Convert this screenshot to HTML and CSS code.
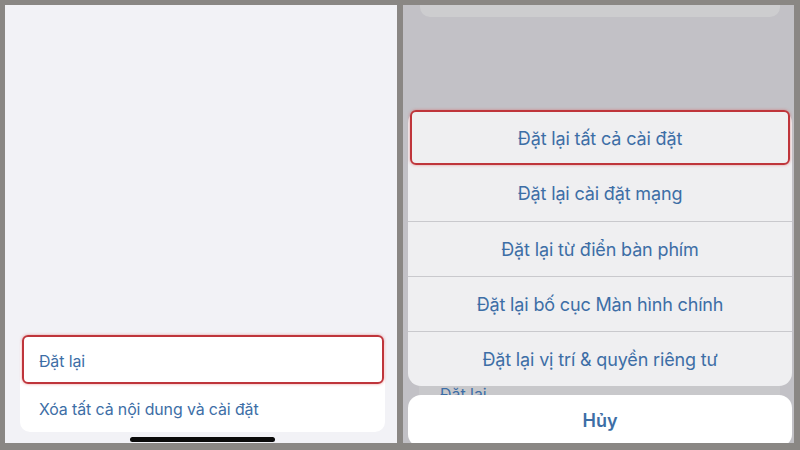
FILE: index.html
```html
<!DOCTYPE html>
<html lang="vi">
<head>
<meta charset="utf-8">
<link rel="stylesheet" href="styles.css">
</head>
<body>
<div class="frame">
  <div class="panel left">
    <div class="card">
      <div class="row row-first highlighted">Đặt lại</div>
      <div class="row">Xóa tất cả nội dung và cài đặt</div>
    </div>
    <div class="home-bar"></div>
  </div>
  <div class="panel right">
    <div class="peek"></div>
    <div class="behind"><span>Đặt lại</span></div>
    <div class="sheet">
      <div class="opt highlighted">Đặt lại tất cả cài đặt</div>
      <div class="opt">Đặt lại cài đặt mạng</div>
      <div class="opt sep">Đặt lại từ điển bàn phím</div>
      <div class="opt sep">Đặt lại bố cục Màn hình chính</div>
      <div class="opt sep">Đặt lại vị trí &amp; quyền riêng tư</div>
    </div>
    <div class="cancel">Hủy</div>
  </div>
</div>
</body>
</html>
```

FILE: styles.css
```css
* { box-sizing: border-box; }
html, body { margin: 0; padding: 0; }
body {
  width: 800px;
  height: 450px;
  background: #8a8784;
  font-family: Inter, "Noto Sans", "Liberation Sans", sans-serif;
  overflow: hidden;
}
.frame {
  display: flex;
  gap: 6px;
  padding: 5px 6px 7px 5px;
  height: 450px;
}
.panel {
  position: relative;
  overflow: hidden;
  height: 438px;
}
.left {
  width: 392px;
  background: #f2f2f6;
  display: flex;
  flex-direction: column;
  justify-content: flex-end;
  padding: 0 12px 11px 15px;
}
.card {
  background: #ffffff;
  border-radius: 10px;
}
.row {
  position: relative;
  height: 48px;
  display: flex;
  align-items: center;
  padding: 2px 0 0 19px;
  font-size: 15.9px;
  color: #3d6ea6;
  letter-spacing: -0.1px;
}
.highlighted::after {
  content: "";
  position: absolute;
  inset: 0;
  border: 2px solid #bf353b;
  border-radius: 6px;
  box-shadow: 0 0 3px rgba(220, 70, 70, 0.55);
}
.row-first::after { left: 2px; right: 1px; top: -1px; }
.home-bar {
  position: absolute;
  left: 125px;
  top: 432px;
  width: 145px;
  height: 5px;
  border-radius: 3px;
  background: #0a0a0a;
}
.right {
  width: 391px;
  background: #c2c1c6;
  display: flex;
  flex-direction: column;
}
.peek {
  height: 12px;
  margin: 0 14px 0 17px;
  background: #cdcdcf;
  border-radius: 0 0 10px 10px;
  flex: none;
}
.behind {
  position: absolute;
  left: 16px;
  right: 14px;
  top: 330px;
  height: 120px;
  background: #c8c8cb;
  border-radius: 10px;
  padding: 50px 0 0 21px;
  font-size: 15.9px;
  color: #3d6ea6;
}
.sheet {
  position: relative;
  z-index: 1;
  margin: 93px 2px 0 5px;
  background: #efeff1;
  border-radius: 13px;
  flex: none;
}
.opt {
  position: relative;
  height: 55.3px;
  display: flex;
  align-items: center;
  justify-content: center;
  padding-top: 1px;
  font-size: 18px;
  color: #3d6ea6;
  letter-spacing: -0.15px;
}
.sep { border-top: 1px solid #c9c9cd; }
.sheet .highlighted::after { left: 2px; right: 2px; top: 0; bottom: 0; }
.cancel {
  position: relative;
  z-index: 1;
  margin: 9px 2px 0 5px;
  height: 52px;
  padding-bottom: 1px;
  background: #ffffff;
  border-radius: 13px;
  display: flex;
  align-items: center;
  justify-content: center;
  font-size: 18px;
  font-weight: 600;
  color: #3d6ea6;
  flex: none;
}
```
